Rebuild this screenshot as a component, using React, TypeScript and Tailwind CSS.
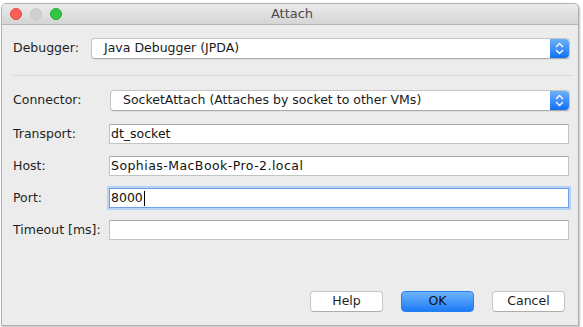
import React from "react";

const font = { fontFamily: '"DejaVu Sans", "Noto Sans", sans-serif' };

function Stepper() {
  return (
    <div className="flex h-full w-[19px] items-center justify-center rounded-r-[4px] bg-gradient-to-b from-[#69b1fa] to-[#0d6ff5]">
      <svg width="9" height="13" viewBox="0 0 9 13" fill="none">
        <path d="M1.5 4.5 L4.5 1.5 L7.5 4.5" stroke="white" strokeWidth="1.4" strokeLinecap="round" strokeLinejoin="round" />
        <path d="M1.5 8.5 L4.5 11.5 L7.5 8.5" stroke="white" strokeWidth="1.4" strokeLinecap="round" strokeLinejoin="round" />
      </svg>
    </div>
  );
}

function Select({ text, pl }: { text: string; pl: string }) {
  return (
    <div className="flex h-[21px] flex-1 items-stretch rounded-[4px] border border-[#c4c4c4] border-b-[#acacac] bg-white shadow-[0_1px_0_rgba(0,0,0,0.05)]">
      <div className={`flex flex-1 items-center text-[12.5px] text-[#1a1a1a] ${pl}`}>{text}</div>
      <Stepper />
    </div>
  );
}

function Field({ label, value, focused, wide }: { label: string; value: string; focused?: boolean; wide?: boolean }) {
  return (
    <div className="flex h-[20px] items-center">
      <div className="w-[96px] text-[12.5px] text-[#1f1f1f]">{label}</div>
      <div
        className={`flex h-[20px] w-[460px] items-center bg-white pl-[1px] text-[12.5px] text-[#111] ${
          focused
            ? "border border-[#6ea0e8] shadow-[0_0_0_2px_#b6d2f5]"
            : "border border-[#c3c3c3] border-t-[#a9a9a9]"
        } ${wide ? "tracking-[0.45px]" : ""}`}
      >
        {value}
        {focused && <span className="ml-[1px] inline-block h-[15px] w-px bg-black" />}
      </div>
    </div>
  );
}

function Button({ label, primary }: { label: string; primary?: boolean }) {
  return (
    <div
      className={`flex h-[21px] w-[73px] items-center justify-center rounded-[4px] text-[12.5px] ${
        primary
          ? "border border-[#2a7ff0] bg-gradient-to-b from-[#6cb3fa] to-[#1b7bf6] text-[#111]"
          : "border border-[#c6c6c6] border-b-[#acacac] bg-white text-[#1f1f1f]"
      }`}
    >
      {label}
    </div>
  );
}

export default function App() {
  return (
    <div className="relative h-[327px] w-[583px] overflow-hidden bg-white" style={font}>
      <div className="h-[3px] bg-white" />
      <div className="ml-[1px] flex h-[323px] w-[578px] flex-col overflow-hidden rounded-t-[5px] border border-[#b0b0b0] bg-[#ececec] shadow-[1px_1px_2px_rgba(0,0,0,0.25)]">
        <div className="relative flex h-[21px] items-center justify-center border-b border-[#b3b3b3] bg-gradient-to-b from-[#ebebeb] to-[#d5d5d5]">
          <div className="absolute left-[8px] top-[4px] flex gap-[8px]">
            <div className="h-[12px] w-[12px] rounded-full border border-[#e2463f] bg-[#fc5f57]" />
            <div className="h-[12px] w-[12px] rounded-full border border-[#c8c8c8] bg-[#d0d0d0]" />
            <div className="h-[12px] w-[12px] rounded-full border border-[#24a733] bg-[#33c748]" />
          </div>
          <span className="pl-[4px] text-[13px] text-[#4a4a4a]">Attach</span>
        </div>

        <div className="flex flex-1 flex-col pl-[11px] pr-[8px]">
          <div className="mt-[13px] flex items-center">
            <div className="w-[78px] text-[12.5px] text-[#1f1f1f]">Debugger:</div>
            <Select text="Java Debugger (JPDA)" pl="pl-[12px]" />
          </div>

          <div className="mt-[16px] mr-[-2px] h-px bg-[#d6d6d6]" />

          <div className="mt-[14px] flex items-center">
            <div className="w-[97px] text-[12.5px] text-[#1f1f1f]">Connector:</div>
            <Select text="SocketAttach (Attaches by socket to other VMs)" pl="pl-[12px]" />
          </div>

          <div className="mt-[13px] flex flex-col gap-[12px]">
            <Field label="Transport:" value="dt_socket" />
            <Field label="Host:" value="Sophias-MacBook-Pro-2.local" wide />
            <Field label="Port:" value="8000" focused />
            <Field label="Timeout [ms]:" value="" />
          </div>

          <div className="mt-[51px] flex justify-end gap-[18px] pr-[5px]">
            <Button label="Help" />
            <Button label="OK" primary />
            <Button label="Cancel" />
          </div>
        </div>
      </div>
    </div>
  );
}
